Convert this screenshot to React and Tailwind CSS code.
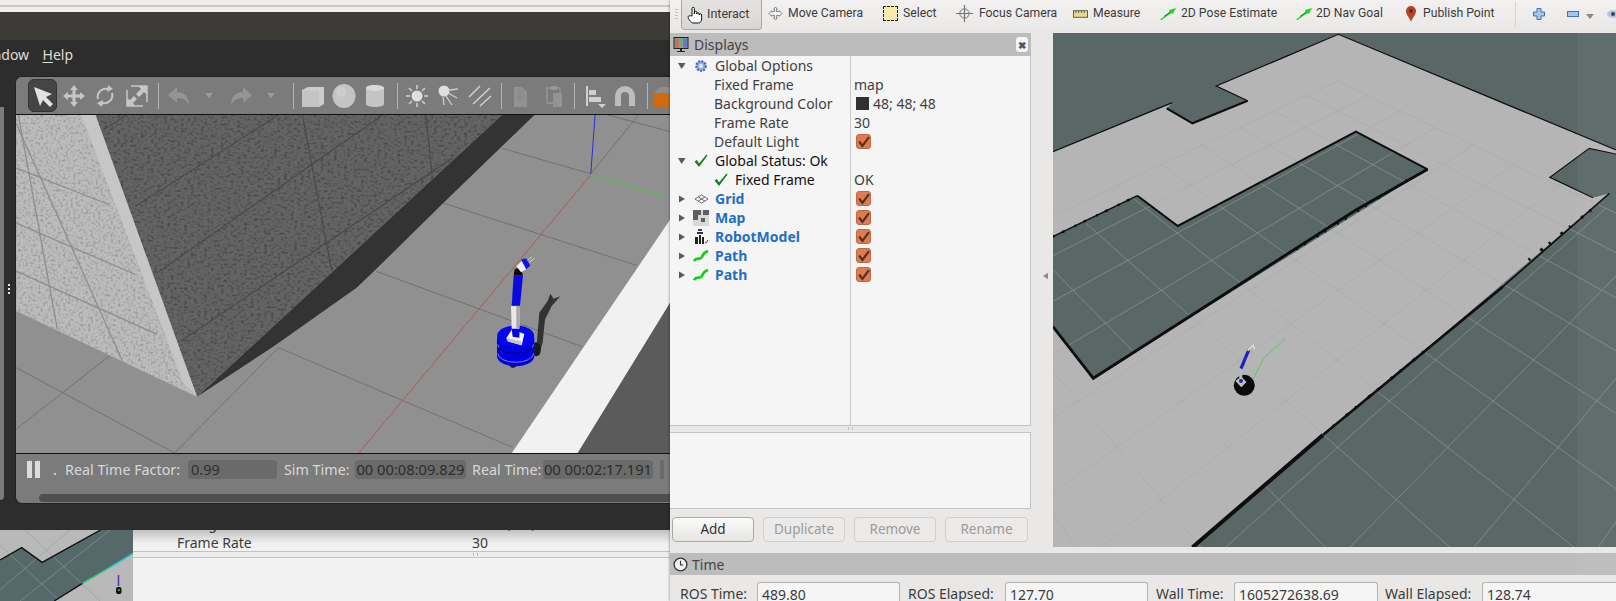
import React from 'react';

// reference zoom coordinates -> screen px, the scene svgs use screen coords as viewBox
const z7 = ([x, y]) => [1040 + x / 2.722, 30 + y / 3];
const g6 = ([x, y]) => [x / 2.306, 100 + y / 3];
const t4 = ([x, y]) => [x / 2.306, 440 + y / 3];
const pts = (fn, list) => list.map((p) => fn(p).map((n) => n.toFixed(1)).join(',')).join(' ');

// rviz grid: homography from the 7x7 cell quad, cells counted from the far corner
const gridPt = (u, v) => {
  const s = u / 7, t = v / 7, k = -0.2336;
  const w = k * s + k * t + 1;
  const x = ((730 + k * 1540) * s + (-730 + k * 80) * t + 810) / w;
  const y = ((382 + k * 535) * s + (382 + k * 535) * t + 153) / w;
  return [x, y];
};
const cells = [0, 1, 2, 3, 4, 5, 6, 7, 8, 9, 10];

const RvizScene = () => {
  const hole = [[35, 620], [265, 497], [375, 588], [860, 305], [1055, 418], [145, 1045], [35, 890]];
  return (
    <svg viewBox="1053 33 563 514" className="w-full h-full block" preserveAspectRatio="none">
      <rect x="1053" y="33" width="563" height="514" fill="#596866" />
      <polygon fill="#b5b5b5" points={pts(z7, [[35, 365], [360, 218], [345, 235], [415, 280], [565, 212], [480, 168], [812, 13], [1568, 360], [1568, 372], [1495, 355], [1388, 442], [1505, 503], [1550, 490], [415, 1552], [35, 1552]])} />
      <polygon fill="#596866" points={pts(z7, hole)} />
      {cells.map((i) => (
        <g key={i} stroke="#a3a8a8" strokeOpacity="0.62" strokeWidth="0.8">
          <line x1={z7(gridPt(i, 0))[0]} y1={z7(gridPt(i, 0))[1]} x2={z7(gridPt(i, 10))[0]} y2={z7(gridPt(i, 10))[1]} />
          <line x1={z7(gridPt(0, i))[0]} y1={z7(gridPt(0, i))[1]} x2={z7(gridPt(10, i))[0]} y2={z7(gridPt(10, i))[1]} />
        </g>
      ))}
      <g fill="none" stroke="#0d0d0d" strokeLinejoin="miter">
        <polyline strokeWidth="1.4" points={pts(z7, [[35, 365], [360, 218]])} />
        <polyline strokeWidth="2" points={pts(z7, [[345, 235], [415, 280], [565, 212]])} />
        <polyline strokeWidth="1.2" points={pts(z7, [[565, 212], [480, 168], [812, 13], [1568, 360]])} />
        <polyline strokeWidth="1.2" points={pts(z7, [[1568, 372], [1495, 355], [1388, 442], [1505, 503]])} />
        <polyline strokeWidth="1.5" points={pts(z7, [[35, 620], [265, 497]])} />
        <polyline strokeWidth="2" points={pts(z7, [[265, 497], [375, 588], [860, 305], [1055, 418]])} />
        <polyline strokeWidth="2.8" points={pts(z7, [[1055, 418], [860, 540], [145, 1045], [35, 890]])} />
        <polyline strokeWidth="1.6" points={pts(z7, [[1550, 490], [1260, 770]])} />
        <polyline strokeWidth="2.6" points={pts(z7, [[1260, 770], [770, 1215]])} />
        <polyline strokeWidth="4" points={pts(z7, [[770, 1215], [415, 1552]])} />
        <polyline strokeWidth="3" strokeDasharray="2 9 3 15" points={pts(z7, [[1045, 965], [780, 1205]])} />
        <polyline strokeWidth="3" strokeDasharray="2 8 3 13" points={pts(z7, [[1500, 540], [1330, 690]])} />
        <polyline strokeWidth="2.6" strokeDasharray="2 7 2 13" points={pts(z7, [[1000, 450], [680, 670]])} />
        <polyline strokeWidth="2.4" strokeDasharray="2 8 3 11" points={pts(z7, [[35, 620], [265, 497]])} />
      </g>
      <polyline fill="none" stroke="#2fe02f" strokeWidth="0.8" points={pts(z7, [[667, 927], [608, 985], [578, 1052]])} />
      <ellipse cx={z7([556, 1066])[0]} cy={z7([556, 1066])[1]} rx="10.5" ry="10.5" fill="#0b0b0b" />
      <polygon fill="#c4c4c4" points={pts(z7, [[532, 1052], [548, 1040], [562, 1056], [548, 1072]])} />
      <polyline fill="none" stroke="#b8b8c0" strokeWidth="3" points={pts(z7, [[546, 1052], [547, 1014]])} />
      <polyline fill="none" stroke="#1a22c0" strokeWidth="3.2" points={pts(z7, [[547, 1016], [568, 960]])} />
      <polyline fill="none" stroke="#d8d8d8" strokeWidth="1.6" points={pts(z7, [[565, 962], [580, 946], [585, 958]])} />
      <circle cx={z7([547, 1053])[0]} cy={z7([547, 1053])[1]} r="2" fill="#1a22c0" />
    </svg>
  );
};

const Robot = () => {
  const r = (x, y) => `${470 + x / 3},${240 + y / 3}`;
  const poly = (list) => list.map(([x, y]) => r(x, y)).join(' ');
  return (
    <g>
      <polygon fill="#333" points={poly([[195, 340], [205, 220], [230, 185], [238, 163], [248, 178], [268, 170], [242, 200], [222, 240], [215, 310], [205, 340]])} />
      <ellipse cx={470 + 196 / 3} cy={240 + 330 / 3} rx="4.5" ry="7" fill="#1a1a1a" />
      <ellipse cx={470 + 126 / 3} cy={240 + 378 / 3} rx="3" ry="2.5" fill="#111" />
      <path fill="#0000e6" d={`M${r(78, 295)} L${r(78, 350)} A18 10 0 0 0 ${r(190, 350)} L${r(190, 295)} Z`} />
      <path fill="none" stroke="#a0a0d8" strokeWidth="0.8" d={`M${r(80, 315)} A18 9 0 0 0 ${r(188, 315)}`} />
      <path fill="none" stroke="#a0a0d8" strokeWidth="0.8" d={`M${r(80, 342)} A18 9 0 0 0 ${r(188, 342)}`} />
      <path fill="none" stroke="#00009a" strokeWidth="2" d={`M${r(84, 325)} A18 9 0 0 0 ${r(184, 325)}`} />
      <ellipse cx={470 + 134 / 3} cy={240 + 290 / 3} rx="18.5" ry="10.5" fill="#0606f0" />
      <polygon fill="#f4f4f4" points={poly([[106, 296], [123, 270], [160, 284], [152, 318], [110, 306]])} />
      <polygon fill="#c4c4c4" points={poly([[106, 296], [150, 306], [152, 318], [110, 306]])} />
      <polygon fill="#0606d8" points={poly([[122, 268], [146, 268], [145, 295], [125, 292]])} />
      <polygon fill="#e8e8e8" points={poly([[120, 200], [147, 200], [145, 268], [122, 268]])} />
      <polygon fill="#a8a8a8" points={poly([[136, 200], [147, 200], [145, 268], [136, 268]])} />
      <polygon fill="#0a0ae0" points={poly([[128, 108], [156, 108], [147, 199], [122, 199]])} />
      <polygon fill="#0a0a0a" points={poly([[131, 88], [148, 84], [156, 108], [128, 108]])} />
      <polygon fill="#f0f0f0" points={poly([[136, 80], [155, 62], [172, 85], [150, 98]])} />
      <polygon fill="#1414e0" points={poly([[150, 60], [165, 56], [178, 78], [166, 90]])} />
      <line x1={470 + 175 / 3} y1={240 + 68 / 3} x2={470 + 190 / 3} y2={240 + 56 / 3} stroke="#ddd" strokeWidth="0.9" />
      <line x1={470 + 170 / 3} y1={240 + 62 / 3} x2={470 + 182 / 3} y2={240 + 52 / 3} stroke="#ddd" strokeWidth="0.9" />
    </g>
  );
};

const GazeboScene = () => {
  const wall = [[218, 45], [1155, 45], [452, 893]];
  const light = [[35, 45], [205, 45], [452, 893], [35, 635]];
  const Ln = ({ a, b, c = '#6e6e6e', w = 0.9 }) => (
    <line x1={g6(a)[0]} y1={g6(a)[1]} x2={g6(b)[0]} y2={g6(b)[1]} stroke={c} strokeWidth={w} />
  );
  return (
    <svg viewBox="15 115 654 339" className="w-full h-full block" preserveAspectRatio="none">
      <defs>
        <filter id="spk" x="0" y="0" width="100%" height="100%" colorInterpolationFilters="sRGB">
          <feTurbulence type="fractalNoise" baseFrequency="0.3 0.42" numOctaves="1" seed="4" />
          <feColorMatrix values="0 0 0 0 0.27  0 0 0 0 0.27  0 0 0 0 0.27  0 0 0 2.6 -1.2" />
          <feComposite in2="SourceGraphic" operator="in" />
        </filter>
        <filter id="spk2" x="0" y="0" width="100%" height="100%" colorInterpolationFilters="sRGB">
          <feTurbulence type="fractalNoise" baseFrequency="0.4" numOctaves="1" seed="9" />
          <feColorMatrix values="0 0 0 0 0.6  0 0 0 0 0.6  0 0 0 0 0.6  0 0 0 3 -1.4" />
          <feComposite in2="SourceGraphic" operator="in" />
        </filter>
      </defs>
      <rect x="15" y="115" width="654" height="339" fill="#909090" />
      <Ln a={[1155, 145]} b={[1360, 222]} />
      <Ln a={[1360, 222]} b={[1470, 45]} />
      <Ln a={[1400, 45]} b={[1543, 95]} />
      <Ln a={[1020, 310]} b={[1465, 497]} />
      <Ln a={[865, 515]} b={[1340, 742]} />
      <Ln a={[640, 745]} b={[1180, 1045]} />
      <Ln a={[35, 805]} b={[400, 1062]} />
      <Ln a={[250, 770]} b={[35, 990]} />
      <Ln a={[640, 745]} b={[400, 1062]} />
      <polygon fill="#333333" points={pts(g6, [[1155, 45], [1230, 45], [1020, 310], [860, 515], [820, 565], [630, 740], [452, 893]])} />
      <polygon fill="#646464" points={pts(g6, wall)} />
      <polygon fill="#000" filter="url(#spk)" points={pts(g6, wall)} />
      <polygon fill="#bcbcbc" points={pts(g6, light)} />
      <polygon fill="#000" filter="url(#spk2)" points={pts(g6, light)} />
      <polygon fill="#c6c6c6" points={pts(g6, [[185, 45], [218, 45], [452, 893], [420, 850]])} />
      <Ln a={[235, 90]} b={[290, 45]} c="#484848" w={1.1} />
      <Ln a={[310, 320]} b={[640, 45]} c="#484848" w={1.1} />
      <Ln a={[360, 520]} b={[880, 45]} c="#484848" w={1.1} />
      <Ln a={[415, 725]} b={[1040, 175]} c="#484848" w={1.1} />
      <Ln a={[695, 45]} b={[762, 510]} c="#484848" w={1.1} />
      <Ln a={[980, 45]} b={[995, 240]} c="#484848" w={1.1} />
      <Ln a={[40, 45]} b={[130, 690]} c="#8e8e8e" w={1.3} />
      <Ln a={[35, 70]} b={[280, 785]} c="#8e8e8e" w={1.3} />
      <Ln a={[35, 205]} b={[250, 315]} c="#8e8e8e" w={1.3} />
      <Ln a={[35, 370]} b={[310, 525]} c="#8e8e8e" w={1.3} />
      <Ln a={[35, 515]} b={[360, 705]} c="#8e8e8e" w={1.3} />
      <polygon fill="#f1f1f1" points={pts(g6, [[1543, 360], [1178, 1062], [1330, 1062], [1543, 610]])} />
      <polygon fill="#5b5b5b" points={pts(g6, [[1543, 610], [1330, 1062], [1543, 1062]])} />
      <Ln a={[1360, 225]} b={[825, 1062]} c="#b8524f" w={0.9} />
      <Ln a={[1370, 45]} b={[1360, 222]} c="#2222e0" w={0.9} />
      <Ln a={[1360, 225]} b={[1543, 295]} c="#3ed03e" w={0.9} />
      <Robot />
    </svg>
  );
};

const Thumb = () => (
  <svg viewBox="0 530 133 71" className="w-full h-full block" preserveAspectRatio="none">
    <rect x="0" y="530" width="133" height="71" fill="#b9b9b9" />
    <polygon fill="#55696a" points={pts(t4, [[0, 360], [50, 323], [97, 367], [232, 270], [307, 270], [307, 340], [125, 483], [0, 483]])} />
    <g stroke="#8f9d9d" strokeWidth="0.6" fill="none">
      <line x1="0" y1="545" x2="60" y2="601" />
      <line x1="25" y1="530" x2="100" y2="601" />
      <line x1="0" y1="590" x2="70" y2="530" />
      <line x1="20" y1="601" x2="110" y2="530" />
    </g>
    <polyline fill="none" stroke="#111" strokeWidth="1.4" points={pts(t4, [[0, 360], [50, 323], [97, 367], [232, 270]])} />
    <polyline fill="none" stroke="#111" strokeWidth="1.4" points={pts(t4, [[125, 483], [190, 430]])} />
    <polyline fill="none" stroke="#2ed07a" strokeWidth="1.4" points={pts(t4, [[190, 430], [250, 385]])} />
    <polyline fill="none" stroke="#1fc8d8" strokeWidth="1.4" points={pts(t4, [[250, 385], [307, 340]])} />
    <line x1="118.5" y1="575" x2="118.5" y2="586" stroke="#5a3aa8" strokeWidth="1.6" />
    <rect x="116" y="587" width="5.5" height="7" rx="2" fill="#111" />
    <rect x="117.8" y="589" width="2" height="2" fill="#3aa86a" />
  </svg>
);

// gazebo toolbar icons
const Ico = ({ children, className = 'ml-[7px]' }) => (
  <svg viewBox="0 0 24 24" className={`w-6 h-6 shrink-0 ${className}`}>{children}</svg>
);
const Sep = ({ className }) => <div className={`w-px h-[26px] shrink-0 bg-[#b4b4b4] ${className}`} />;
const Drop = ({ className }) => (
  <svg viewBox="0 0 8 5" className={`w-2 h-[5px] shrink-0 ${className}`}><path d="M0 0h8L4 5z" fill="#9b9b9b" /></svg>
);

const GazeboToolbar = () => (
  <div className="h-[37px] flex items-center bg-[#7b7b7b] overflow-hidden">
    <div className="w-[29px] h-[33px] ml-[12px] shrink-0 flex items-center justify-center rounded-[6px] bg-[#454545] border border-[#333]">
      <svg viewBox="0 0 24 24" className="w-6 h-6"><path d="M3 3l18 7-6 3 7 7-3 3-7-7-3 6z" fill="#e2e2e2" /></svg>
    </div>
    <Ico className="ml-[5px]"><path d="M12 1l4 5h-2.500v4.500H18V8l5 4-5 4v-2.500h-4.500V18H16l-4 5-4-5h2.500v-4.500H6V16l-5-4 5-4v2.500h4.500V6H8z" fill="#c6c6c6" /></Ico>
    <Ico><path d="M5 15a8 8 0 0 1 11-9.500M19 9a8 8 0 0 1-11 9.500" fill="none" stroke="#c6c6c6" strokeWidth="2" /><path d="M15 1l5 4-6 3zM9 23l-5-4 6-3z" fill="#c6c6c6" /></Ico>
    <Ico className="ml-[8px]"><path d="M2 6v16h16M6 2h16v16" fill="none" stroke="#c6c6c6" strokeWidth="1.500" /><path d="M13 2h9v9l-3-3-5 5-3-3 5-5zM2 22v-8l3 2 4-4 3 3-4 4 2 3z" fill="#c6c6c6" /></Ico>
    <Sep className="ml-[9px]" />
    <Ico className="ml-[8px]"><path d="M10 3L1 11l9 8v-5c5 0 9 1 12 7 0-8-4-13-12-13z" fill="#949494" /></Ico>
    <Drop className="ml-[14px]" />
    <Ico className="ml-[16px]"><path d="M14 3l9 8-9 8v-5c-5 0-9 1-12 7 0-8 4-13 12-13z" fill="#949494" /></Ico>
    <Drop className="ml-[14px]" />
    <Sep className="ml-[18px]" />
    <Ico><path d="M1 6l6-3h16v17l-5 3H1z" fill="#cdcdcd" /><path d="M1 6l17 1v16H1z" fill="#c4c4c4" /></Ico>
    <Ico><ellipse cx="12" cy="12" rx="11.500" ry="12" fill="#c4c4c4" /><ellipse cx="9" cy="8" rx="5" ry="5" fill="#cecece" /></Ico>
    <Ico><path d="M3 4c0-4 18-4 18 0v16c0 4-18 4-18 0z" fill="#c4c4c4" /><ellipse cx="12" cy="4" rx="9" ry="3" fill="#d8d8d8" /></Ico>
    <Sep className="ml-[10px]" />
    <Ico><circle cx="12" cy="12" r="5.500" fill="#dedede" /><path d="M12 1v4M12 19v4M1 12h4M19 12h4M4 4l3 3M17 17l3 3M20 4l-3 3M7 17l-3 3" stroke="#cfcfcf" strokeWidth="1.500" /></Ico>
    <Ico><circle cx="8" cy="7" r="5.500" fill="#dedede" /><path d="M13 6l9-1M12 9l9 5M10 12l6 9M7 13l1 8" stroke="#cfcfcf" strokeWidth="1.300" /></Ico>
    <Ico className="ml-[8px]"><path d="M12 2L1 13M22 4L5 20M23 12L12 22" stroke="#d2d2d2" strokeWidth="1.500" /></Ico>
    <Sep className="ml-[9px]" />
    <Ico><path d="M5 3h8l5 5v15H5z" fill="#919191" /><path d="M8 7h7M8 10h7M8 13h7M8 16h7" stroke="#858585" /></Ico>
    <Ico className="ml-[9px]"><path d="M5 4h13v15H5z" fill="none" stroke="#979797" strokeWidth="1.400" /><path d="M9 2h6v4H9z" fill="#979797" /><path d="M11 9h9v14h-9z" fill="#939393" /></Ico>
    <Sep className="ml-[8px]" />
    <Ico className="ml-[8px]"><path d="M4 2v20" stroke="#d0d0d0" strokeWidth="2" /><path d="M6 6h7v5H6zM6 13h12v5H6z" fill="#d0d0d0" /><path d="M15 20h8l-4 4z" fill="#d0d0d0" /></Ico>
    <Ico className="ml-[6px]"><path d="M2 22V12a10 10 0 0 1 20 0v10h-6V12a4 4 0 0 0-8 0v10z" fill="#bdbdbd" /></Ico>
    <Sep className="ml-[10px]" />
    <svg viewBox="0 0 24 24" className="w-6 h-6 shrink-0 ml-[3px]"><path d="M2 10l7-7h15v20H2z" fill="#8c8c8c" /><rect x="2" y="9" width="22" height="14" fill="#d06a10" /></svg>
  </div>
);

const LeftWindow = () => (
  <div className="w-[670px] shrink-0 flex flex-col h-[601px] overflow-hidden">
    <div className="h-[12px] bg-[#efeeec] flex items-center"><div className="w-full h-[2px] bg-[#c9c9c7]" /></div>
    <div className="h-[28px] bg-[#3c3b37]" />
    <div className="h-[36px] bg-[#2d2d2d] flex items-center pb-[8px] text-[14px] text-[#dfdbd2] overflow-hidden">
      <span className="-ml-[24px] w-[47.500px] shrink-0">Window</span>
      <span className="ml-[19px]"><u className="underline-offset-2">H</u>elp</span>
    </div>
    <div className="h-[454px] bg-[#2d2d2d] flex">
      <div className="w-[15px] shrink-0 relative">
        <div className="w-[4px] h-[393px] mt-[31px] bg-[#7b7b7b] rounded-br-[4px]" />
        <div className="absolute left-[8px] top-[208px] w-[2px] h-[10px] flex flex-col justify-between">
          <div className="h-[2px] bg-[#e6e6e6]" /><div className="h-[2px] bg-[#e6e6e6]" /><div className="h-[2px] bg-[#e6e6e6]" />
        </div>
      </div>
      <div className="flex-1 h-[428px] bg-[#7b7b7b] rounded-l-[7px] border-t border-l border-b border-[#222] overflow-hidden flex flex-col">
        <GazeboToolbar />
        <div className="h-[340px] border-y border-[#111] shrink-0"><GazeboScene /></div>
        <div className="flex-1 relative">
          <div className="flex items-center h-[31px] text-[14.300px] text-[#d8d8d8] whitespace-nowrap">
            <div className="ml-[11px] w-[5px] h-[17px] bg-[#dcdcdc]" />
            <div className="ml-[3px] w-[5px] h-[17px] bg-[#dcdcdc]" />
            <span className="ml-[13px] w-[5px] text-[#e8e8e8]">.</span>
            <span className="ml-[7px] w-[123px]">Real Time Factor:</span>
            <div className="w-[89px] h-[19px] rounded bg-[#6a6a6a] text-[#2f2f2f] text-[14.500px] pl-[3px] leading-[19px]">0.99</div>
            <span className="ml-[7px] w-[71px]">Sim Time:</span>
            <div className="w-[111px] h-[19px] rounded bg-[#6a6a6a] text-[#2c2c2c] text-[14.700px] leading-[19px] text-center">00 00:08:09.829</div>
            <span className="ml-[6px] w-[71px]">Real Time:</span>
            <div className="w-[110px] h-[19px] rounded bg-[#6a6a6a] text-[#2c2c2c] text-[14.700px] leading-[19px] text-center">00 00:02:17.191</div>
            <div className="ml-[7px] w-[4px] h-[19px] bg-[#6a6a6a]" />
          </div>
          <div className="ml-[23px] mt-[9px] h-[8px] bg-[#4f4f4f] rounded-l-full" />
        </div>
      </div>
    </div>
    <div className="h-[71px] flex">
      <div className="w-[133px] shrink-0"><Thumb /></div>
      <div className="flex-1 bg-[#f2f2f2] flex flex-col text-[14px] text-[#3c3c3c] relative overflow-hidden">
        <div className="absolute top-0 inset-x-0 h-[14px] bg-gradient-to-b from-black/20 to-transparent" />
        <div className="h-[19px] -mt-[16px] flex shrink-0 leading-[19px]">
          <span className="ml-[44px] w-[295px]">Background Color</span>
          <span className="ml-[20px]">48; 48; 48</span>
        </div>
        <div className="h-[19px] flex shrink-0 leading-[19px] relative">
          <span className="ml-[44px] w-[295px]">Frame Rate</span>
          <span>30</span>
        </div>
        <div className="h-[7px] mt-[-1px] border-y border-[#c2c2c0] bg-[#ededeb] shrink-0">
          <div className="w-[5px] h-[3px] mt-px ml-[340px] border-x border-[#bbb]" />
        </div>
      </div>
    </div>
  </div>
);

// rviz bits
const Tool = ({ width, icon, label }) => (
  <div className={`${width} shrink-0 flex items-center gap-[5px] whitespace-nowrap`}>{icon}<span>{label}</span></div>
);

const Arrow2D = () => (
  <svg viewBox="0 0 16 12" className="w-4 h-3 shrink-0">
    <path d="M0 11.500L10 4l-1-2 7-2-3 6-1.500-1L1.500 12z" fill="#22dc22" />
    <path d="M4 8.500L11 3.500" stroke="#0f7a18" strokeWidth="1" />
  </svg>
);

const RvizToolbar = () => (
  <div className="h-[33px] flex bg-gradient-to-b from-[#f2f1ef] to-[#e9e8e6] text-[12.200px] text-[#3c3c3c] shrink-0 overflow-hidden font-['Roboto',sans-serif]">
    <div className="w-[11px] shrink-0 flex flex-col gap-[2px] items-center pt-[9px] pl-[2px]">
      <div className="w-[3px] h-px bg-[#c2c2c0]" /><div className="w-[3px] h-px bg-[#c2c2c0]" /><div className="w-[3px] h-px bg-[#c2c2c0]" /><div className="w-[3px] h-px bg-[#c2c2c0]" />
    </div>
    <div className="w-[81px] h-[30px] shrink-0 border-x border-b border-[#a9a9a7] rounded-b-[4px] bg-gradient-to-b from-[#e4e3e1] to-[#d8d7d5] flex items-center pl-[4px] gap-[3px]">
      <svg viewBox="0 0 18 18" className="w-[18px] h-[18px] shrink-0">
        <path d="M6 10V2.500a1.200 1.200 0 0 1 2.400 0V8V6.500a1.200 1.200 0 0 1 2.400 0V8a1.200 1.200 0 0 1 2.400 0v1a1.200 1.200 0 0 1 2.400 0v4c0 2-1 4-3 4H7c-2 0-5-5-5-6 0-1.200 1.800-1.500 4-1z" fill="#fff" stroke="#111" strokeWidth="1" />
      </svg>
      <span className="text-[12.500px]">Interact</span>
    </div>
    <div className="w-[6px] shrink-0" />
    <div className="flex h-[27px]">
      <Tool width="w-[115px]" label="Move Camera" icon={
        <svg viewBox="0 0 16 16" className="w-[15px] h-[15px] shrink-0"><path d="M8 1l2 2.500H9V6h3V5l3 3-3 3v-1H9v2.500h1L8 15l-2-2.500h1V10H4v1L1 8l3-3v1h3V3.500H6z" fill="#f5f5f5" stroke="#6f6f6f" strokeWidth="0.9" /></svg>
      } />
      <Tool width="w-[74px]" label="Select" icon={
        <div className="w-[15px] h-[15px] shrink-0 bg-[#f6eba8] border border-dashed border-[#222]" />
      } />
      <Tool width="w-[116px]" label="Focus Camera" icon={
        <svg viewBox="0 0 18 18" className="w-[17px] h-[17px] shrink-0 -ml-px mr-px"><circle cx="9" cy="9" r="5" fill="#e4e4e4" stroke="#777" /><path d="M9 0v18M0 9h18" stroke="#777" strokeWidth="1.200" /></svg>
      } />
      <Tool width="w-[87px]" label="Measure" icon={
        <svg viewBox="0 0 16 8" className="w-[15px] h-2 shrink-0"><rect x="0.500" y="0.500" width="15" height="7" fill="#ecd98c" stroke="#555" /><path d="M3 1v2M6 1v2M9 1v2M12 1v2" stroke="#555" /></svg>
      } />
      <div className="w-[136px] shrink-0 flex items-center gap-[5px] whitespace-nowrap"><Arrow2D /><span>2D Pose Estimate</span></div>
      <div className="w-[110px] shrink-0 flex items-center gap-[4px] whitespace-nowrap"><Arrow2D /><span>2D Nav Goal</span></div>
      <div className="w-[109px] shrink-0 flex items-center gap-[7px] whitespace-nowrap">
        <svg viewBox="0 0 10 16" className="w-[10px] h-4 shrink-0"><path d="M5 0a5 5 0 0 1 5 5c0 4-4 7-5 11-1-4-5-7-5-11a5 5 0 0 1 5-5z" fill="#b5432a" /><circle cx="5" cy="5" r="1.800" fill="#5a2418" /></svg>
        <span>Publish Point</span>
      </div>
    </div>
    <div className="w-px h-[25px] mt-[2px] bg-[#d4d3d1] shrink-0" />
    <div className="h-[27px] flex items-center shrink-0">
      <svg viewBox="0 0 12 12" className="w-3 h-3 ml-[17px]"><path d="M4 .5h4V4h3.500v4H8v3.500H4V8H.5V4H4z" fill="#a8c6ea" stroke="#3f74b4" /></svg>
      <svg viewBox="0 0 12 6" className="w-3 h-[6px] ml-[22px]"><rect x=".5" y=".5" width="11" height="5" fill="#a8c6ea" stroke="#3f74b4" /></svg>
      <svg viewBox="0 0 8 5" className="w-2 h-[5px] ml-[7px] mt-[6px]"><path d="M0 0h8L4 5z" fill="#8a8a8a" /></svg>
      <svg viewBox="0 0 12 8" className="w-3 h-2 ml-[13px] shrink-0"><ellipse cx="6" cy="4" rx="6" ry="4" fill="#b8c8dc" /><circle cx="6" cy="4" r="2" fill="#32465f" /></svg>
    </div>
  </div>
);

const Check = () => (
  <div className="w-[15px] h-[15px] rounded-[3px] bg-[#e07a50] border border-[#c06a42] flex items-center justify-center">
    <svg viewBox="0 0 12 12" className="w-[13px] h-[13px]"><path d="M2 6l3 4 6-8" fill="none" stroke="#4e3226" strokeWidth="2" /></svg>
  </div>
);
const Caret = ({ open }) => (
  <svg viewBox="0 0 8 8" className="w-2 h-2 shrink-0">
    <path d={open ? 'M0 1h7.500L3.700 7z' : 'M1 .5L7 4 1 7.500z'} fill="#5a5a5a" />
  </svg>
);
const GreenTick = () => (
  <svg viewBox="0 0 14 14" className="w-[14px] h-[14px] shrink-0"><path d="M.5 7.500L3 6l2 3.500L12.500 .5l1 1L5 13z" fill="#12811d" /></svg>
);
const PathIcon = () => (
  <svg viewBox="0 0 16 14" className="w-4 h-[14px]"><path d="M1 12c3-5 6 0 8-4 1-3 3-5 6-6" fill="none" stroke="#0fd20f" strokeWidth="2.600" /></svg>
);
const icons = {
  gear: (
    <svg viewBox="0 0 14 14" className="w-[14px] h-[14px]"><circle cx="7" cy="7" r="4.800" fill="#8eaee8" stroke="#3f68bc" strokeWidth="2" strokeDasharray="2 1.200" /><circle cx="7" cy="7" r="2" fill="#e8eefa" /></svg>
  ),
  grid: (
    <svg viewBox="0 0 16 10" className="w-[15px] h-[10px]"><path d="M8 .5L15 5 8 9.500 1 5zM4.500 2.700l7 4.500M11.500 2.700l-7 4.500" fill="none" stroke="#555" strokeWidth="0.900" /></svg>
  ),
  map: (
    <svg viewBox="0 0 16 16" className="w-4 h-4"><rect width="16" height="16" fill="#d8d8d8" /><path d="M0 0h8v5H5v5H0zM10 0h6v5h-6zM8 8h4v4H8z" fill="#5e5e5e" /></svg>
  ),
  robot: (
    <svg viewBox="0 0 16 16" className="w-4 h-4"><rect x="5" y="0" width="4" height="2" fill="#2a3fa8" /><rect x="4" y="3" width="6" height="2" fill="#333" /><path d="M2 15V8h3v7zM6 15V6h2v9zM9 15V8h2v7z" fill="#222" /><path d="M12 14c2 0 2-2 3-3" fill="none" stroke="#333" /></svg>
  ),
};

const Row = ({ caret, icon, label, cls = '', value, check, indent = 'pl-[44px]' }) => (
  <div className="h-[19px] flex items-center whitespace-nowrap">
    <div className="w-[180px] shrink-0 flex items-center">
      {caret === undefined ? (
        <span className={`${indent} ${cls}`}>{label}</span>
      ) : (
        <>
          <div className="w-[22px] pl-[8px] shrink-0"><Caret open={caret} /></div>
          <div className="w-[18px] shrink-0 flex items-center justify-center">{icon}</div>
          <span className={`ml-[5px] ${cls}`}>{label}</span>
        </>
      )}
    </div>
    <div className="w-px h-full bg-[#c9c9c9] shrink-0" />
    <div className="pl-[3px] flex items-center">
      {value}
      {check && <div className="ml-[2px]"><Check /></div>}
    </div>
  </div>
);

const blue = 'font-bold text-[#1f6fc4]';
const Displays = () => (
  <div className="w-[361px] shrink-0 flex flex-col bg-[#e9e8e6]">
    <div className="h-[23px] bg-[#bcbcbc] flex items-center pl-[3px] text-[14px] text-[#444] shrink-0">
      <svg viewBox="0 0 16 16" className="w-4 h-4 shrink-0">
        <rect x="1" y="0.500" width="14" height="11" fill="#7aa87a" stroke="#222" />
        <rect x="2" y="1.500" width="4" height="9" fill="#c86a6a" /><rect x="10" y="1.500" width="4" height="9" fill="#6a78c8" />
        <path d="M7 12h2v2h3v1H4v-1h3z" fill="#222" />
      </svg>
      <span className="ml-[5px] flex-1">Displays</span>
      <div className="w-[12px] h-[15px] mr-[3px] rounded-[3px] bg-[#f4f4f4] flex items-center justify-center text-[10px] font-bold leading-none text-[#555]">✖</div>
    </div>
    <div className="h-[369px] shrink-0 bg-[#f5f5f5] border-r border-[#c4c4c2] text-[14px] text-[#404040] flex flex-col">
      <Row caret={true} icon={icons.gear} label="Global Options" />
      <Row label="Fixed Frame" value="map" />
      <Row label="Background Color" value={<span className="flex items-center"><span className="w-[13px] h-[13px] ml-[2px] mr-[4px] bg-[#303030] inline-block" />48; 48; 48</span>} />
      <Row label="Frame Rate" value="30" />
      <Row label="Default Light" check />
      <Row caret={true} icon={<GreenTick />} label="Global Status: Ok" cls="text-[#111]" />
      <div className="h-[19px] flex items-center whitespace-nowrap">
        <div className="w-[180px] shrink-0 flex items-center pl-[44px]"><GreenTick /><span className="text-[#111] ml-[7px]">Fixed Frame</span></div>
        <div className="w-px h-full bg-[#c9c9c9] shrink-0" />
        <div className="pl-[3px]">OK</div>
      </div>
      <Row caret={false} icon={icons.grid} label="Grid" cls={blue} check />
      <Row caret={false} icon={icons.map} label="Map" cls={blue} check />
      <Row caret={false} icon={icons.robot} label="RobotModel" cls={blue} check />
      <Row caret={false} icon={<PathIcon />} label="Path" cls={blue} check />
      <Row caret={false} icon={<PathIcon />} label="Path" cls={blue} check />
      <div className="flex-1 flex"><div className="w-[180px]" /><div className="w-px bg-[#c9c9c9]" /></div>
    </div>
    <div className="h-[7px] shrink-0 border-t border-[#c4c4c2] flex justify-center">
      <div className="w-[5px] h-[3px] mt-px mr-[1px] border-x border-[#bbb]" />
    </div>
    <div className="h-[77px] shrink-0 bg-[#f5f5f5] border border-[#c4c4c2] border-l-0" />
    <div className="flex gap-[9px] pl-[2px] pt-[8px] text-[13.500px]">
      <button className="w-[82px] h-[25px] rounded-[4px] border border-[#a9a9a7] bg-gradient-to-b from-[#fbfbfa] to-[#e6e5e3] text-[#333]">Add</button>
      <button className="w-[82px] h-[25px] rounded-[4px] border border-[#d0cfcd] bg-[#ebeae8] text-[#9b9b9b]">Duplicate</button>
      <button className="w-[82px] h-[25px] rounded-[4px] border border-[#d0cfcd] bg-[#ebeae8] text-[#9b9b9b]">Remove</button>
      <button className="w-[83px] h-[25px] rounded-[4px] border border-[#d0cfcd] bg-[#ebeae8] text-[#9b9b9b]">Rename</button>
    </div>
  </div>
);

const TimeField = ({ label, value, labelW, fieldW, ml }) => (
  <>
    <span className={`${ml} ${labelW} mt-[7px] leading-[24px] shrink-0 whitespace-nowrap`}>{label}</span>
    <div className={`${fieldW} mt-[7px] shrink-0 h-[26px] bg-[#f5f5f5] border-t border-x border-[#b4b4b2] rounded-t-[3px] pl-[4px] leading-[24px]`}>{value}</div>
  </>
);

const RightWindow = () => (
  <div className="flex-1 h-[601px] flex flex-col bg-[#e9e8e6] relative overflow-hidden font-['Noto_Sans',sans-serif] shadow-[-1px_0_2px_rgba(0,0,0,0.25)]">
    <RvizToolbar />
    <div className="h-[514px] flex shrink-0">
      <Displays />
      <div className="w-[22px] shrink-0 flex items-center justify-center">
        <svg viewBox="0 0 6 8" className="w-[5px] h-[8px] ml-[6px] -mt-[28px]"><path d="M6 0v8L0 4z" fill="#8a8a8a" /></svg>
      </div>
      <div className="flex-1 overflow-hidden"><RvizScene /></div>
    </div>
    <div className="h-[6px] shrink-0" />
    <div className="h-[22px] shrink-0 bg-[#bcbcbc] flex items-center pl-[3px] text-[14px] text-[#444]">
      <svg viewBox="0 0 16 16" className="w-[15px] h-[15px]"><circle cx="8" cy="8" r="6.800" fill="#f2f2f2" stroke="#333" strokeWidth="1.400" /><path d="M8 4v4.500h3" fill="none" stroke="#333" strokeWidth="1.200" /></svg>
      <span className="ml-[4px]">Time</span>
    </div>
    <div className="flex-1 flex items-start overflow-hidden text-[14px] text-[#3c3c3c]">
      <TimeField ml="ml-[10px]" label="ROS Time:" labelW="w-[77px]" fieldW="w-[143px]" value="489.80" />
      <TimeField ml="ml-[8px]" label="ROS Elapsed:" labelW="w-[97px]" fieldW="w-[143px]" value="127.70" />
      <TimeField ml="ml-[8px]" label="Wall Time:" labelW="w-[78px]" fieldW="w-[144px]" value="1605272638.69" />
      <TimeField ml="ml-[7px]" label="Wall Elapsed:" labelW="w-[97px]" fieldW="w-[144px]" value="128.74" />
    </div>
    {/* screenshot seam, the last strip is a bit lighter */}
    <div className="absolute right-0 top-[33px] bottom-0 w-[39px] bg-white/[0.04] pointer-events-none" />
  </div>
);

export default function App() {
  return (
    <div className="w-[1616px] h-[601px] flex overflow-hidden bg-[#e9e8e6] font-['Noto_Sans',sans-serif]">
      <LeftWindow />
      <RightWindow />
    </div>
  );
}
